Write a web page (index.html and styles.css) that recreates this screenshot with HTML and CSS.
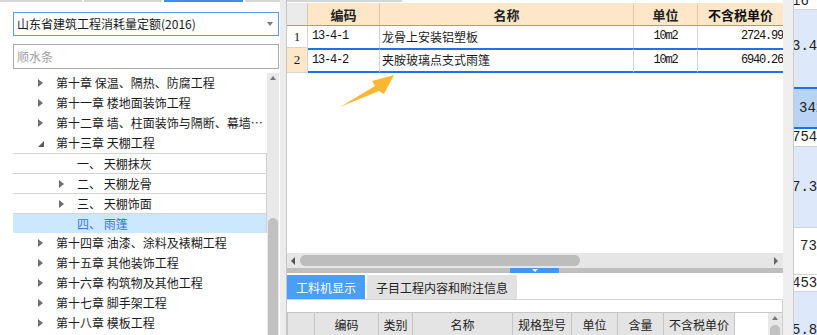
FILE: index.html
```html
<!DOCTYPE html>
<html lang="zh-CN">
<head>
    <meta charset="UTF-8">
    <title>定额库</title>
    <link rel="stylesheet" href="styles.css">
</head>
<body>

    <div class="app">
        <!-- Left: quota library tree -->
        <aside class="left">
            <div class="top-tabs"><span class="t1"></span><span class="t2"></span><span class="t3"></span><span class="t4"></span></div>
            <div class="left-body">
                <div class="picker"><span>山东省建筑工程消耗量定额(2016)</span><i class="caret"></i></div>
                <input class="search" type="text" placeholder="顺水条">
                <div class="tree-wrap">
                    <ul class="tree">
                        <li><span class="tw closed"></span><span class="label">第十章 保温、隔热、防腐工程</span></li>
                        <li><span class="tw closed"></span><span class="label">第十一章 楼地面装饰工程</span></li>
                        <li><span class="tw closed"></span><span class="label">第十二章 墙、柱面装饰与隔断、幕墙工程</span></li>
                        <li><span class="tw open"></span><span class="label">第十三章 天棚工程</span></li>
                        <li class="sub"><span class="tw"></span><span class="label">一、 天棚抹灰</span></li>
                        <li class="sub"><span class="tw closed"></span><span class="label">二、 天棚龙骨</span></li>
                        <li class="sub"><span class="tw closed"></span><span class="label">三、 天棚饰面</span></li>
                        <li class="sub on"><span class="tw"></span><span class="label">四、 雨篷</span></li>
                        <li><span class="tw closed"></span><span class="label">第十四章 油漆、涂料及裱糊工程</span></li>
                        <li><span class="tw closed"></span><span class="label">第十五章 其他装饰工程</span></li>
                        <li><span class="tw closed"></span><span class="label">第十六章 构筑物及其他工程</span></li>
                        <li><span class="tw closed"></span><span class="label">第十七章 脚手架工程</span></li>
                        <li><span class="tw closed"></span><span class="label">第十八章 模板工程</span></li>
                    </ul>
                    <div class="vscroll"><i class="up"></i><div class="thumb"></div></div>
                </div>
            </div>
        </aside>

        <div class="splitter"></div>

        <!-- Middle: quota items -->
        <main class="main">
            <div class="main-top"><span></span></div>
            <div class="grid">
                <div class="row head">
                    <div class="num"></div>
                    <div>编码</div>
                    <div>名称</div>
                    <div>单位</div>
                    <div class="price">不含税单价</div>
                </div>
                <div class="row body-row">
                    <div class="num">1</div>
                    <div class="code">13-4-1</div>
                    <div class="name">龙骨上安装铝塑板</div>
                    <div class="unit">10m2</div>
                    <div class="price">2724.99</div>
                </div>
                <div class="row body-row sel">
                    <div class="num">2</div>
                    <div class="code">13-4-2</div>
                    <div class="name">夹胺玻璃点支式雨篷</div>
                    <div class="unit">10m2</div>
                    <div class="price">6940.26</div>
                </div>
            </div>
            <div class="blank"></div>
            <div class="hscroll"><i class="larr"></i><div class="hthumb"></div><i class="rarr"></i></div>
            <div class="hsplit"><span class="grip"></span></div>
            <div class="tabs">
                <div class="tab active">工料机显示</div>
                <div class="tab">子目工程内容和附注信息</div>
            </div>
            <div class="sub">
                <div class="sub-head">
                    <div></div>
                    <div>编码</div>
                    <div>类别</div>
                    <div>名称</div>
                    <div>规格型号</div>
                    <div>单位</div>
                    <div>含量</div>
                    <div>不含税单价</div>
                    <div class="gapc"></div>
                    <div class="sb"><i class="up"></i><span class="sthumb"></span></div>
                </div>
            </div>
        </main>

        <div class="strip"></div>

        <!-- Right: neighbouring pane, cut off by the window -->
        <div class="far">
            <div class="f1">16</div>
            <div class="f2">3.42</div>
            <div class="f3">342</div>
            <div class="f4">7545</div>
            <div class="f5">7.35</div>
            <div class="f6">73</div>
            <div class="f7">4533</div>
            <div class="f8">5.82</div>
        </div>
    </div>

    <!-- annotation arrow -->
    <svg class="pointer" width="817" height="335" viewBox="0 0 817 335">
        <polygon points="340,107 375,86 372,81 394,75 384,94 379,91" fill="#fbb733"/>
    </svg>

</body>
</html>
```

FILE: styles.css
```css
* {
    box-sizing: border-box;
}

body {
    margin: 0;
    width: 817px;
    height: 335px;
    overflow: hidden;
    position: relative;
    font-family: "Noto Sans CJK SC", "Noto Sans", sans-serif;
    font-size: 12px;
    color: #1b1b1b;
    background-color: #fff;
}

.app {
    display: flex;
    height: 335px;
}

/* Left tree panel */
.left {
    width: 280px;
    display: flex;
    flex-direction: column;
}

.top-tabs {
    display: flex;
    gap: 2px;
    height: 3px;
    padding-bottom: 1px;
}

.top-tabs span {
    background-color: #d6d6d6;
}

.top-tabs .t1 { width: 82px; }
.top-tabs .t2 { width: 78px; }
.top-tabs .t3 { width: 79px; background-color: #3d8ce8; }
.top-tabs .t4 { flex: 1; }

.left-body {
    flex: 1;
    min-height: 0;
    display: flex;
    flex-direction: column;
    padding: 0 1px 0 13px;
}

.picker {
    margin-top: 9px;
    height: 24px;
    border: 1px solid #5b9de3;
    display: flex;
    align-items: center;
    justify-content: space-between;
    padding: 0 5px 0 3px;
    line-height: 20px;
}

.caret {
    border-top: 4px solid #7a7a7a;
    border-left: 3px solid transparent;
    border-right: 3px solid transparent;
}

.search {
    margin-top: 8px;
    height: 25px;
    border: 1px solid #ababab;
    padding: 0 3px;
    font: 12px "Noto Sans CJK SC", sans-serif;
    outline: none;
}

.search::placeholder {
    color: #a0a0a0;
}

.tree-wrap {
    margin-top: 4px;
    flex: 1;
    min-height: 0;
    display: flex;
    overflow: hidden;
}

.tree {
    list-style: none;
    margin: 0;
    padding: 0;
    flex: 1;
    min-width: 0;
}

.tree li {
    height: 20px;
    display: flex;
    align-items: center;
    padding: 0 4px 0 22px;
    white-space: nowrap;
}

.tree li.sub {
    padding-left: 43px;
}

.tree li.on {
    background-color: #cce8ff;
    color: #3a78d4;
}

.tw {
    width: 21px;
    height: 20px;
    flex: none;
    display: flex;
    align-items: center;
    padding-left: 3px;
}

.tw.closed::before {
    content: "";
    border-left: 5px solid #6e6e6e;
    border-top: 4px solid transparent;
    border-bottom: 4px solid transparent;
}

.tw.open::before {
    content: "";
    margin-top: 2px;
    border-right: 6px solid #5a5a5a;
    border-top: 6px solid transparent;
}

.label {
    overflow: hidden;
    text-overflow: ellipsis;
    line-height: 20px;
}

.vscroll {
    width: 12px;
    background-color: #e9e9e9;
    display: flex;
    flex-direction: column;
    align-items: center;
}

.up {
    margin-top: 3px;
    border-bottom: 4px solid #777;
    border-left: 3px solid transparent;
    border-right: 3px solid transparent;
}

.vscroll .thumb {
    margin-top: 138px;
    width: 10px;
    flex: 1;
    background-color: #c1c1c1;
    border-radius: 5px 5px 0 0;
}

.splitter {
    width: 7px;
    background-color: #ececec;
    border-right: 1px solid #c6c6c6;
}

/* Middle panel */
.main {
    width: 496px;
    display: flex;
    flex-direction: column;
}

.main-top {
    height: 3px;
    flex: none;
}

.main-top span {
    display: block;
    width: 115px;
    height: 2px;
    background-color: #d6d6d6;
}

.row {
    display: grid;
    grid-template-columns: 21px 72px 254px 64px 85px;
}

.row > div {
    border-right: 1px solid #d4d4d4;
    overflow: hidden;
    white-space: nowrap;
}

.head {
    height: 23px;
    background-color: #fde7c8;
    border-bottom: 1px solid #6aa8ef;
    font-size: 13px;
    font-weight: bold;
    color: #222;
}

.head > div {
    display: flex;
    align-items: center;
    justify-content: center;
    border-right-color: #d9cbb8;
}

.head .num {
    background-color: #ebebeb;
    border-bottom: none;
}

.body-row {
    height: 22px;
    line-height: 21px;
}

.body-row.sel {
    height: 25px;
}

.body-row.sel > div:not(.num) {
    border-top: 2px solid #1b74e9;
    border-bottom: 2px solid #1b74e9;
    line-height: 20px;
}

.num {
    text-align: center;
    font-family: "Liberation Serif", serif;
    font-size: 13px;
    border-bottom: 1px solid #d4d4d4;
}

.sel .num {
    background-color: #fde7c8;
    line-height: 23px;
}

.code {
    padding-left: 4px;
}

.code, .unit, .price {
    font-family: "Liberation Mono", monospace;
    font-size: 12px;
    letter-spacing: -1.2px;
    color: #111;
}

.head .price {
    font-family: "Noto Sans CJK SC", sans-serif;
    font-size: 13px;
    letter-spacing: 0;
}

.name {
    padding-left: 2px;
}

.unit {
    text-align: center;
}

.row > .price {
    text-align: right;
    border-right: none;
}

.blank {
    flex: 1;
}

.hscroll {
    flex: none;
    height: 15px;
    background-color: #e6e6e6;
    display: flex;
    align-items: center;
    padding: 0 5px 0 4px;
}

.larr {
    border-right: 4px solid #555;
    border-top: 4px solid transparent;
    border-bottom: 4px solid transparent;
}

.rarr {
    margin-left: auto;
    border-left: 4px solid #666;
    border-top: 4px solid transparent;
    border-bottom: 4px solid transparent;
}

.hthumb {
    margin-left: 5px;
    width: 280px;
    height: 11px;
    border-radius: 6px;
    background-color: #bdbdbd;
}

.hsplit {
    flex: none;
    height: 5px;
    background-color: #bfbfbf;
    padding-left: 223px;
}

.grip {
    display: flex;
    justify-content: center;
    width: 49px;
    height: 5px;
    background-color: #4795ef;
}

.grip::after {
    content: "";
    margin-top: 1px;
    border-top: 3px solid #fff;
    border-left: 3px solid transparent;
    border-right: 3px solid transparent;
}

.tabs {
    flex: none;
    margin-top: 2px;
    height: 24px;
    display: flex;
    gap: 2px;
}

.tab {
    width: 150px;
    display: flex;
    align-items: center;
    justify-content: center;
    background-color: #e2e2e2;
    color: #222;
}

.tab.active {
    width: 78px;
    background-color: #4a9ef6;
    color: #fff;
}

.sub {
    flex: none;
    height: 36px;
    border-top: 1px solid #d4d4d4;
    border-right: 1px solid #cfcfcf;
    padding-top: 12px;
}

.sub-head {
    display: grid;
    grid-template-columns: 28px 64px 34px 100px 59px 46px 46px 71px 33px 14px;
    height: 24px;
}

.sub-head > div {
    background-color: #e4e4e4;
    border-top: 1px solid #c6c6c6;
    border-right: 1px solid #c6c6c6;
    display: flex;
    align-items: center;
    justify-content: center;
    color: #222;
}

.sub-head > div:first-child {
    border-left: 1px solid #c6c6c6;
}

.sub-head .gapc {
    background-color: #fff;
    border-right: none;
}

.sub-head .sb {
    background-color: #e8e8e8;
    border-right: none;
    flex-direction: column;
    justify-content: flex-start;
}

.sthumb {
    margin-top: 5px;
    width: 10px;
    flex: 1;
    background-color: #c1c1c1;
    border-radius: 5px 5px 0 0;
}

/* Far right pane */
.strip {
    width: 11px;
    background-color: #efefef;
    border-right: 1px solid #cccccc;
}

.far {
    flex: 1;
    min-width: 0;
    display: flex;
    flex-direction: column;
    font-family: "Liberation Mono", monospace;
    font-size: 14px;
    color: #222;
    overflow: hidden;
}

.far > div {
    flex: none;
    overflow: hidden;
    white-space: nowrap;
    text-indent: -2px;
    border-bottom: 1px solid #d4d4d4;
}

.far .f1 { height: 10px; line-height: 2px; }
.far .f2 { height: 77px; line-height: 72px; background-color: #dde8fa; border-bottom: none; }
.far .f3 { height: 42px; line-height: 38px; background-color: #b9d3f5; border-top: 2px solid #1b74e9; border-bottom: 2px solid #1b74e9; text-indent: 5px; }
.far .f4 { height: 18px; line-height: 17px; }
.far .f5 { height: 81px; line-height: 80px; background-color: #dde8fa; }
.far .f6 { height: 47px; padding-top: 8px; line-height: 20px; text-indent: 6px; }
.far .f7 { height: 17px; line-height: 16px; }
.far .f8 { flex: 1; padding-top: 30px; line-height: 16px; background-color: #dde8fa; border-bottom: none; }

/* Annotation arrow over the table */
.pointer {
    position: absolute;
    left: 0;
    top: 0;
    pointer-events: none;
}
```
